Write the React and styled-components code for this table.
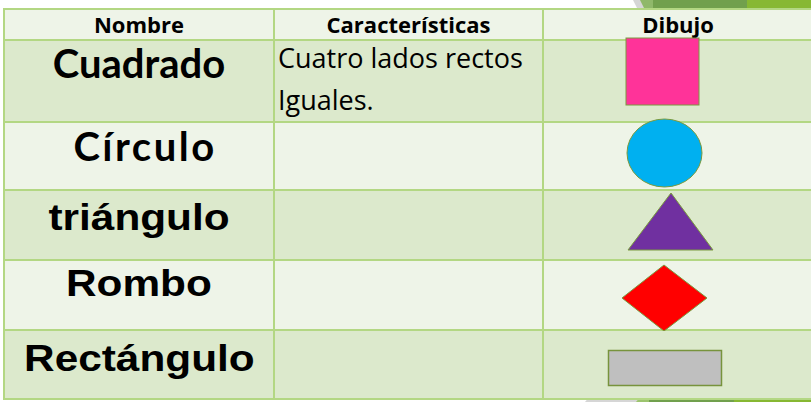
import React from "react";
import styled, { createGlobalStyle } from "styled-components";

const GlobalStyle = createGlobalStyle`
  html, body {
    margin: 0;
    padding: 0;
    background: #ffffff;
    overflow: hidden;
  }
`;

const LINE = "#b3d783";
const TONES = {
  light: "#eef4e8",
  dark: "#dce9cc",
};

const Page = styled.div`
  position: relative;
  width: 811px;
  height: 402px;
  padding: 8px 0 0 3px;
  box-sizing: border-box;
  overflow: hidden;
`;

const Backdrop = styled.svg`
  position: absolute;
  left: 0;
  top: 0;
  z-index: 0;
`;

const Table = styled.div`
  position: relative;
  z-index: 1;
  display: grid;
  grid-template-columns: 268px 267px 268px;
  grid-template-rows: 29px 80px 66px 68px 68px 67px;
  gap: 2px;
  padding: 2px;
  width: fit-content;
  background: ${LINE};
`;

const Cell = styled.div`
  background: ${(p) => TONES[p.$tone]};
  color: #000;
  min-width: 0;
`;

const HeadCell = styled(Cell)`
  font-family: "Open Sans", "DejaVu Sans", sans-serif;
  font-weight: 700;
  font-size: 22px;
  line-height: 29px;
  text-align: center;
  white-space: nowrap;
`;

const NameCell = styled(Cell)`
  display: flex;
  justify-content: center;
  padding-top: ${(p) => p.$top}px;
  padding-left: ${(p) => p.$shift || 0}px;
  box-sizing: border-box;
  white-space: nowrap;
`;

const Word = styled.span`
  display: inline-block;
  line-height: 1;
  font-weight: 700;
  letter-spacing: ${(p) => p.$spacing || 0}px;
  ${(p) =>
    p.$kind === "arial"
      ? `
    font-family: "Liberation Sans", Arial, sans-serif;
    font-size: 36.5px;
    transform: scaleX(1.16);
  `
      : `
    font-family: Lato, "Open Sans", sans-serif;
    font-size: 40px;
  `}
`;

const InfoCell = styled(Cell)`
  font-family: "Open Sans", "DejaVu Sans", sans-serif;
  font-size: 27px;
  line-height: 42px;
  padding-left: 3px;
`;

const InfoText = styled.div`
  margin-top: -4px;
`;

const DrawCell = styled(Cell)`
  position: relative;
`;

const Canvas = styled.svg`
  display: block;
  width: 100%;
  height: 100%;
  overflow: visible;
`;

const EDGE = "#7a9a3e";

const shapes = {
  square: <rect x="82" y="-3" width="73" height="67" fill="#ff3399" stroke={EDGE} strokeWidth="1" />,
  circle: <ellipse cx="120.5" cy="30" rx="37.5" ry="34" fill="#00b0f0" stroke={EDGE} strokeWidth="1" />,
  triangle: <polygon points="127,2 84,59 169,59" fill="#7030a0" stroke={EDGE} strokeWidth="1" />,
  diamond: <polygon points="120,4 163,37 120,70 78,37" fill="#ff0000" stroke={EDGE} strokeWidth="1" />,
  rect: <rect x="64.5" y="19.5" width="113" height="35" fill="#bfbfbf" stroke="#77933c" strokeWidth="1.5" />,
};

const rows = [
  { name: "Cuadrado", kind: "lato", top: 2, tone: "dark", shape: "square", info: ["Cuatro lados rectos", "Iguales."] },
  { name: "Círculo", kind: "lato", top: 3, shift: 12, spacing: 2.5, tone: "light", shape: "circle" },
  { name: "triángulo", kind: "arial", top: 9, tone: "dark", shape: "triangle" },
  { name: "Rombo", kind: "arial", top: 5, tone: "light", shape: "diamond" },
  { name: "Rectángulo", kind: "arial", top: 10, tone: "dark", shape: "rect" },
];

export default function App() {
  return (
    <>
      <GlobalStyle />
      <Page>
        <Backdrop width="811" height="402" viewBox="0 0 811 402">
          <polygon points="633,0 811,0 811,10 638,10" fill="#d6d6d6" />
          <polygon points="640,0 811,0 811,10 645,10" fill="#8fb86a" />
          <polygon points="653,0 747,0 747,10 653,10" fill="#71a04d" />
          <polygon points="747,0 811,0 811,10 747,10" fill="#87b833" />
          <polygon points="585,402 590,396 811,396 811,402" fill="#d6d6d6" />
          <polygon points="636,402 641,396 811,396 811,402" fill="#9cc46e" />
          <polygon points="649,396 734,396 734,402 649,402" fill="#71a04d" />
          <polygon points="734,396 811,396 811,402 734,402" fill="#87b833" />
        </Backdrop>
        <Table>
          <HeadCell $tone="light">Nombre</HeadCell>
          <HeadCell $tone="light">Características</HeadCell>
          <HeadCell $tone="light">Dibujo</HeadCell>
          {rows.map((r) => (
            <React.Fragment key={r.name}>
              <NameCell $tone={r.tone} $top={r.top} $shift={r.shift}>
                <Word $kind={r.kind} $spacing={r.spacing}>{r.name}</Word>
              </NameCell>
              <InfoCell $tone={r.tone}>
                {r.info && (
                  <InfoText>
                    {r.info.map((line) => (
                      <div key={line}>{line}</div>
                    ))}
                  </InfoText>
                )}
              </InfoCell>
              <DrawCell $tone={r.tone}>
                <Canvas>{shapes[r.shape]}</Canvas>
              </DrawCell>
            </React.Fragment>
          ))}
        </Table>
      </Page>
    </>
  );
}
